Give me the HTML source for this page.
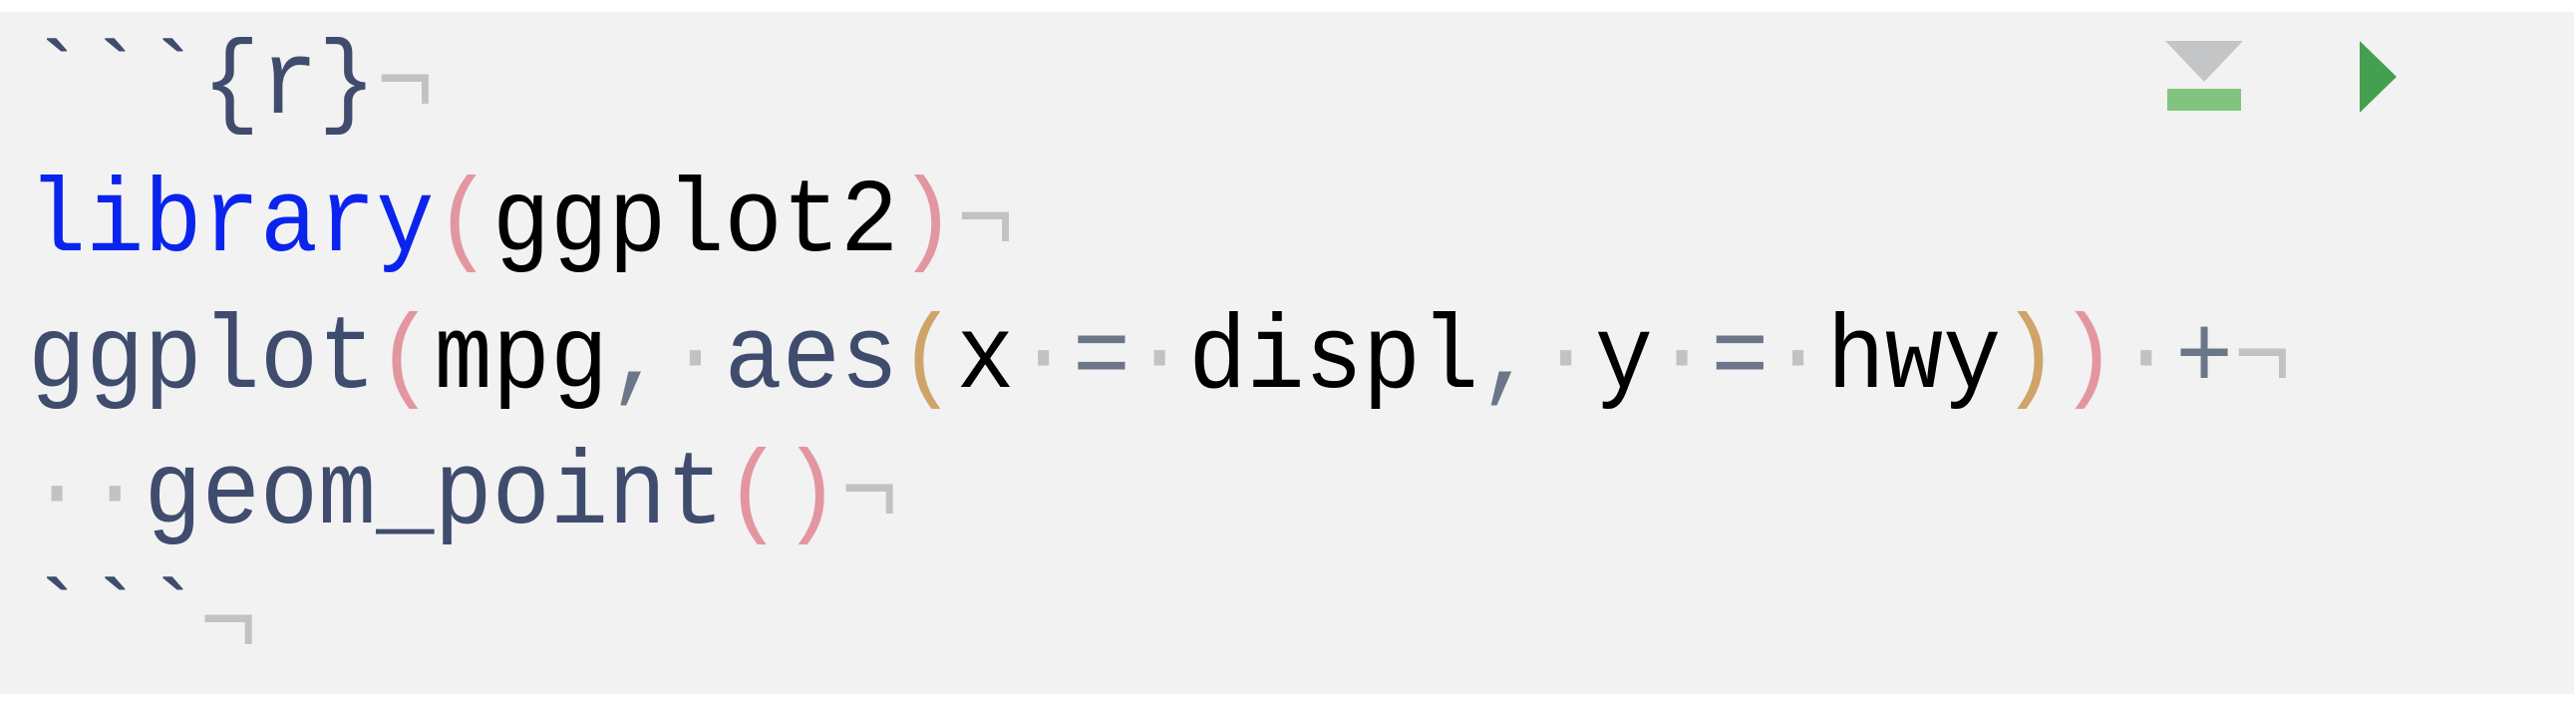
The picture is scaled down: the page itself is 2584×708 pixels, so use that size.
<!DOCTYPE html>
<html><head><meta charset="utf-8"><style>
html,body{margin:0;padding:0;background:#fff;width:2584px;height:708px;overflow:hidden}
#box{position:relative;margin-top:12px;width:2582px;height:684px;background:#f2f2f2}
.l{position:absolute;left:28px;font-family:"Liberation Mono","DejaVu Sans Mono",monospace;font-size:97px;line-height:137px;height:137px;white-space:pre;color:#000;transform:scaleY(1.08);transform-origin:0 94px}
.s{color:#3f4c6e}.b{color:#0a24ee}.p{color:#e3969f}.o{color:#d0a468}.c{color:#6b7789}.d{color:#c2c2c2}.n{color:#c2c2c2}
svg{position:absolute;left:0;top:0}
</style></head><body>
<div id="box">
<div class="l" style="top:8px"><span class="s">&#96;&#96;&#96;{r}</span><span class="n">¬</span></div>
<div class="l" style="top:146px"><span class="b">library</span><span class="p">(</span>ggplot2<span class="p">)</span><span class="n">¬</span></div>
<div class="l" style="top:283px"><span class="s">ggplot</span><span class="p">(</span>mpg<span class="c">,</span><span class="d">·</span><span class="s">aes</span><span class="o">(</span>x<span class="d">·</span><span class="c">=</span><span class="d">·</span>displ<span class="c">,</span><span class="d">·</span>y<span class="d">·</span><span class="c">=</span><span class="d">·</span>hwy<span class="o">)</span><span class="p">)</span><span class="d">·</span><span class="c">+</span><span class="n">¬</span></div>
<div class="l" style="top:419px"><span class="d">··</span><span class="s">geom_point</span><span class="p">()</span><span class="n">¬</span></div>
<div class="l" style="top:548px"><span class="s">&#96;&#96;&#96;</span></div>
<div class="l" style="top:550px;left:200px"><span class="n">¬</span></div>
<svg width="2582" height="684" viewBox="0 12 2582 684">
<polygon points="2172,41 2250,41 2211,82" fill="#c4c5c7"/>
<rect x="2174" y="89" width="74" height="22" fill="#80c47f"/>
<polygon points="2367,41 2404,77 2367,113" fill="#43a04f"/>
</svg>
</div>
</body></html>
